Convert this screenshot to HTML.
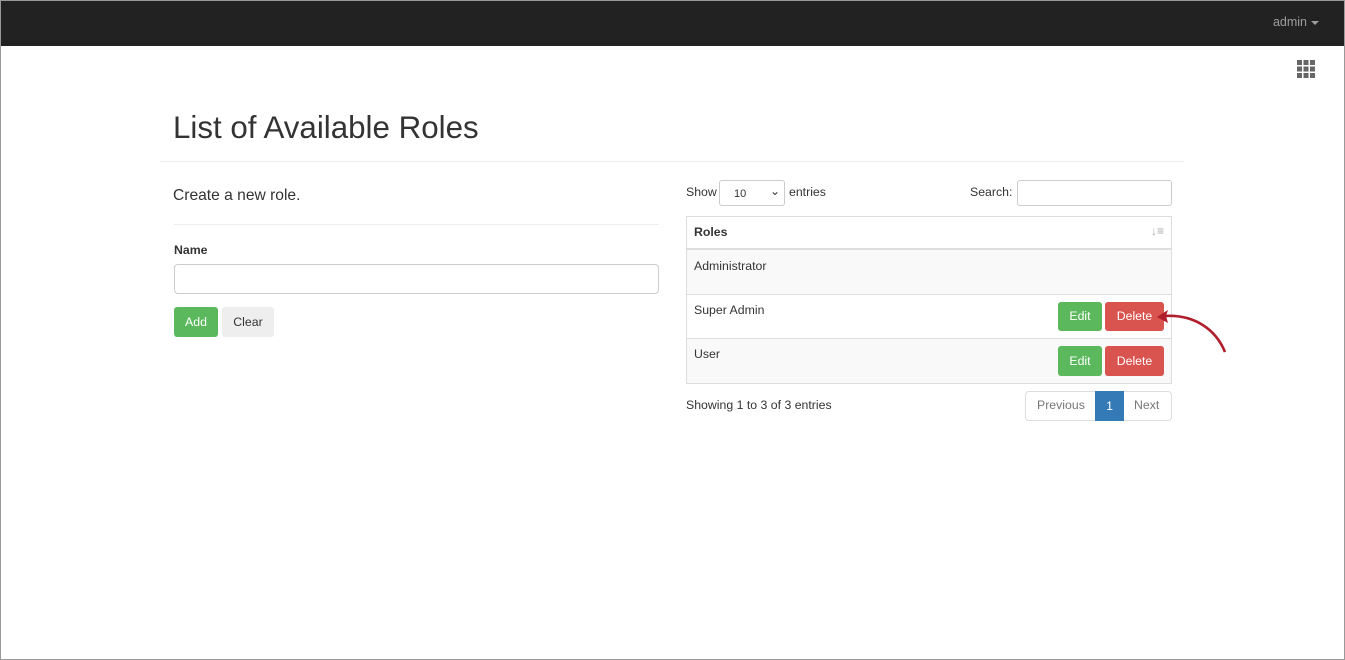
<!DOCTYPE html>
<html><head><style>
*{box-sizing:border-box;margin:0;padding:0}
body{width:1345px;height:660px;position:relative;background:#fff;font-family:"Liberation Sans",Arial,sans-serif;font-size:12.3px;color:#333;overflow:hidden}
.a{position:absolute}
.top{left:0;top:0;width:1345px;height:46px;background:#222;border-top:1px solid #888}
.btn{position:absolute;border-radius:3px;color:#fff;font-size:12.3px;text-align:center}
.g{background:#5cb85c}.r{background:#d9534f}
</style></head><body>
<div class="a top"><div class="a" style="right:38px;top:14px;color:#9d9d9d;font-size:12.5px">admin</div>
<div class="a" style="right:26px;top:20px;width:0;height:0;border-left:4px solid transparent;border-right:4px solid transparent;border-top:4px solid #9d9d9d"></div></div>
<div class="a" style="left:0;top:0;width:1345px;height:660px;border:1px solid #999;pointer-events:none"></div>
<svg class="a" style="left:1296px;top:59px" width="20" height="20"><g fill="#666">
<rect x="1" y="1" width="5" height="5"/><rect x="7.5" y="1" width="5" height="5"/><rect x="14" y="1" width="5" height="5"/>
<rect x="1" y="7.5" width="5" height="5"/><rect x="7.5" y="7.5" width="5" height="5"/><rect x="14" y="7.5" width="5" height="5"/>
<rect x="1" y="14" width="5" height="5"/><rect x="7.5" y="14" width="5" height="5"/><rect x="14" y="14" width="5" height="5"/></g></svg>
<div class="a" style="left:173px;top:110px;font-size:31.3px;color:#333">List of Available Roles</div>
<div class="a" style="left:160px;top:161px;width:1024px;height:1px;background:#eee"></div>
<div class="a" style="left:173px;top:187px;font-size:15.6px">Create a new role.</div>
<div class="a" style="left:174px;top:224px;width:485px;height:1px;background:#eee"></div>
<div class="a" style="left:174px;top:243px;font-weight:bold">Name</div>
<div class="a" style="left:174px;top:264px;width:485px;height:30px;border:1px solid #ccc;border-radius:4px"></div>
<div class="btn g" style="left:174px;top:307px;width:44px;height:30px;line-height:30px">Add</div>
<div class="btn" style="left:222px;top:307px;width:52px;height:30px;line-height:30px;background:#eee;color:#333">Clear</div>

<div class="a" style="left:686px;top:185px">Show</div>
<div class="a" style="left:719px;top:180px;width:66px;height:26px;border:1px solid #ccc;border-radius:3px;font-size:11px;padding:7px 0 0 14px">10<span style="position:absolute;left:50px;top:3px;font-size:12px">&#8964;</span></div>
<div class="a" style="left:789px;top:185px">entries</div>
<div class="a" style="left:970px;top:185px">Search:</div>
<div class="a" style="left:1017px;top:180px;width:155px;height:26px;border:1px solid #ccc;border-radius:3px"></div>

<div class="a" style="left:686px;top:216px;width:486px;height:168px;border:1px solid #ddd"></div>
<div class="a" style="left:694px;top:225px;font-weight:bold">Roles</div>
<div class="a" style="left:1151px;top:224px;color:#aaa;font-size:12px;font-weight:bold">&#8595;&#8801;</div>
<div class="a" style="left:687px;top:248px;width:484px;height:2px;background:#ddd"></div>
<div class="a" style="left:687px;top:250px;width:484px;height:44px;background:#f9f9f9"></div>
<div class="a" style="left:687px;top:294px;width:484px;height:1px;background:#ddd"></div>
<div class="a" style="left:687px;top:338px;width:484px;height:1px;background:#ddd"></div>
<div class="a" style="left:687px;top:339px;width:484px;height:44px;background:#f9f9f9"></div>
<div class="a" style="left:694px;top:259px">Administrator</div>
<div class="a" style="left:694px;top:303px">Super Admin</div>
<div class="a" style="left:694px;top:347px">User</div>
<div class="btn g" style="left:1058px;top:302px;width:44px;height:29px;line-height:29px">Edit</div>
<div class="btn r" style="left:1105px;top:302px;width:59px;height:29px;line-height:29px">Delete</div>
<div class="btn g" style="left:1058px;top:346px;width:44px;height:30px;line-height:30px">Edit</div>
<div class="btn r" style="left:1105px;top:346px;width:59px;height:30px;line-height:30px">Delete</div>
<svg class="a" style="left:1150px;top:300px" width="85" height="60"><path d="M75 52 C66 30 45 14 14 16" stroke="#b01e2e" stroke-width="2.6" fill="none"/><path d="M7 17 L18 10 L16 16 L18 23 Z" fill="#b01e2e"/></svg>

<div class="a" style="left:686px;top:398px">Showing 1 to 3 of 3 entries</div>
<div class="a" style="left:1025px;top:391px;width:147px;height:30px;border:1px solid #ddd;border-radius:4px"></div>
<div class="a" style="left:1037px;top:398px;color:#777">Previous</div>
<div class="a" style="left:1095px;top:391px;width:29px;height:30px;background:#337ab7;color:#fff;text-align:center;line-height:30px">1</div>
<div class="a" style="left:1134px;top:398px;color:#777">Next</div>
</body></html>
